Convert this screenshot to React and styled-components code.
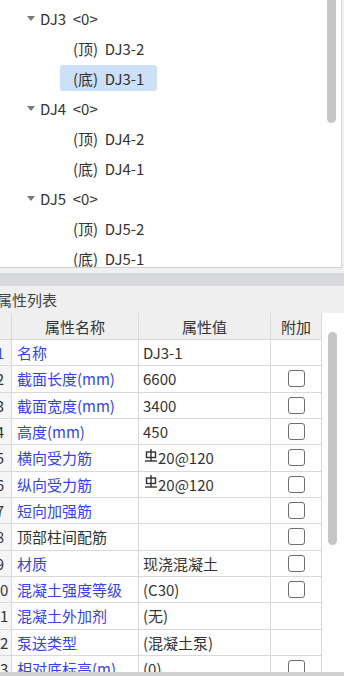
import React from "react";
import styled, { createGlobalStyle } from "styled-components";

const GlobalStyle = createGlobalStyle`
  html, body {
    margin: 0;
    padding: 0;
    background: #f0f0f0;
  }
  * {
    box-sizing: border-box;
  }
`;

const Page = styled.div`
  width: 344px;
  height: 676px;
  overflow: hidden;
  display: flex;
  flex-direction: column;
  background: #f0f0f0;
  font-family: "Noto Sans CJK SC", "Noto Sans", sans-serif;
  color: #333;
`;

const TreePanel = styled.div`
  height: 268px;
  width: 342px;
  flex: none;
  display: flex;
  background: #fff;
  border-right: 1px solid #d6d6d6;
  border-bottom: 1px solid #d0d0d0;
  overflow: hidden;
`;

const TreeList = styled.div`
  flex: 1;
  padding-top: 3px;
`;

const TreeRow = styled.div`
  height: 30px;
  display: flex;
  align-items: center;
  padding-left: ${({ $level }) => ($level ? 60 : 27)}px;
  font-size: 15px;
  line-height: 1;
`;

const Caret = styled.span`
  width: 0;
  height: 0;
  border-left: 4px solid transparent;
  border-right: 4px solid transparent;
  border-top: 5px solid #7a7a7a;
  margin-right: 5px;
`;

const Label = styled.span`
  display: flex;
  align-items: center;
  height: 26px;
  padding: 0 13px;
  border-radius: 3px;
  background: ${({ $selected }) => ($selected ? "#cce1f8" : "transparent")};
  white-space: pre;
`;

const GroupLabel = styled.span`
  white-space: pre;
`;

const ScrollTrack = styled.div`
  width: 14px;
  flex: none;
  padding-right: 4px;
`;

const Thumb = styled.div`
  width: 9px;
  height: ${({ $h }) => $h}px;
  margin-top: ${({ $top }) => $top}px;
  background: #c6c6c6;
  border-radius: 5px;
`;

const Gap = styled.div`
  height: 5px;
  flex: none;
`;

const Splitter = styled.div`
  height: 13px;
  flex: none;
  background: #d6d8dc;
`;

const TitleBar = styled.div`
  height: 27px;
  flex: none;
  display: flex;
  align-items: center;
  background: #efefef;
  font-size: 15px;
  color: #444;
  overflow: hidden;
`;

const TitleText = styled.span`
  margin-left: -3px;
  white-space: nowrap;
`;

const TableArea = styled.div`
  flex: 1;
  display: flex;
  overflow: hidden;
  background: #fff;
`;

const TableClip = styled.div`
  width: 322px;
  flex: none;
  overflow: hidden;
`;

const Grid = styled.div`
  margin-left: -11px;
  display: grid;
  grid-template-columns: 23px 127px 132px 51px;
  grid-auto-rows: 26.33px;
  grid-template-rows: 27px;
  font-size: 15px;
  line-height: 1;
`;

const Cell = styled.div`
  display: flex;
  align-items: center;
  justify-content: ${({ $center }) => ($center ? "center" : "flex-start")};
  padding-left: ${({ $pad }) => $pad || 0}px;
  border-right: 1px solid #d9d9d9;
  border-bottom: 1px solid #d9d9d9;
  background: ${({ $head, $num }) => ($head ? "#efefef" : $num ? "#f5f5f5" : "#fff")};
  color: ${({ $blue }) => ($blue ? "#3542ee" : "#333")};
  white-space: nowrap;
  overflow: hidden;
`;

const Check = styled.span`
  flex: none;
  width: 17px;
  height: 17px;
  border: 1px solid #6e6e6e;
  border-radius: 3px;
  background: #fff;
`;

const RebarIcon = styled.svg`
  width: 12px;
  height: 13px;
  margin-right: 1px;
  margin-top: -5px;
  flex: none;
`;

const SideScroll = styled.div`
  flex: 1;
  padding-left: 6px;
`;

const BottomBar = styled.div`
  height: 4px;
  flex: none;
  background: #cfcfcf;
`;

const Rebar = () => (
  <RebarIcon viewBox="0 0 12 13">
    <rect x="1.5" y="3" width="9" height="5.5" fill="none" stroke="#333" strokeWidth="1.4" />
    <line x1="6" y1="0" x2="6" y2="12" stroke="#333" strokeWidth="1.4" />
    <line x1="0" y1="12" x2="12" y2="12" stroke="#333" strokeWidth="1.4" />
  </RebarIcon>
);

const tree = [
  { label: "DJ3  <0>", group: true },
  { label: "(顶)  DJ3-2" },
  { label: "(底)  DJ3-1", selected: true },
  { label: "DJ4  <0>", group: true },
  { label: "(顶)  DJ4-2" },
  { label: "(底)  DJ4-1" },
  { label: "DJ5  <0>", group: true },
  { label: "(顶)  DJ5-2" },
  { label: "(底)  DJ5-1" },
];

const rows = [
  { name: "名称", value: "DJ3-1", blue: true, check: false },
  { name: "截面长度(mm)", value: "6600", blue: true, check: true },
  { name: "截面宽度(mm)", value: "3400", blue: true, check: true },
  { name: "高度(mm)", value: "450", blue: true, check: true },
  { name: "横向受力筋", value: "20@120", rebar: true, blue: true, check: true },
  { name: "纵向受力筋", value: "20@120", rebar: true, blue: true, check: true },
  { name: "短向加强筋", value: "", blue: true, check: true },
  { name: "顶部柱间配筋", value: "", blue: false, check: true },
  { name: "材质", value: "现浇混凝土", blue: true, check: true },
  { name: "混凝土强度等级", value: "(C30)", blue: true, check: true },
  { name: "混凝土外加剂", value: "(无)", blue: true, check: false },
  { name: "泵送类型", value: "(混凝土泵)", blue: true, check: false },
  { name: "相对底标高(m)", value: "(0)", blue: true, check: true },
];

const App = () => {
  return (
    <Page>
      <GlobalStyle />
      <TreePanel>
        <TreeList>
          {tree.map((t, i) =>
            t.group ? (
              <TreeRow key={i}>
                <Caret />
                <GroupLabel>{t.label}</GroupLabel>
              </TreeRow>
            ) : (
              <TreeRow key={i} $level={1}>
                <Label $selected={t.selected}>{t.label}</Label>
              </TreeRow>
            )
          )}
        </TreeList>
        <ScrollTrack>
          <Thumb $h={130} $top={-7} />
        </ScrollTrack>
      </TreePanel>
      <Gap />
      <Splitter />
      <TitleBar>
        <TitleText>属性列表</TitleText>
      </TitleBar>
      <TableArea>
        <TableClip>
          <Grid>
            <Cell $head />
            <Cell $head $center>属性名称</Cell>
            <Cell $head $center>属性值</Cell>
            <Cell $head $center>附加</Cell>
            {rows.map((r, i) => (
              <React.Fragment key={i}>
                <Cell $num $center $blue={i === 0}>{i + 1}</Cell>
                <Cell $pad={5} $blue={r.blue}>{r.name}</Cell>
                <Cell $pad={r.rebar ? 6 : 4}>
                  {r.rebar && <Rebar />}
                  {r.value}
                </Cell>
                <Cell $center>{r.check && <Check />}</Cell>
              </React.Fragment>
            ))}
          </Grid>
        </TableClip>
        <SideScroll>
          <Thumb $h={213} $top={19} />
        </SideScroll>
      </TableArea>
      <BottomBar />
    </Page>
  );
};

export default App;
